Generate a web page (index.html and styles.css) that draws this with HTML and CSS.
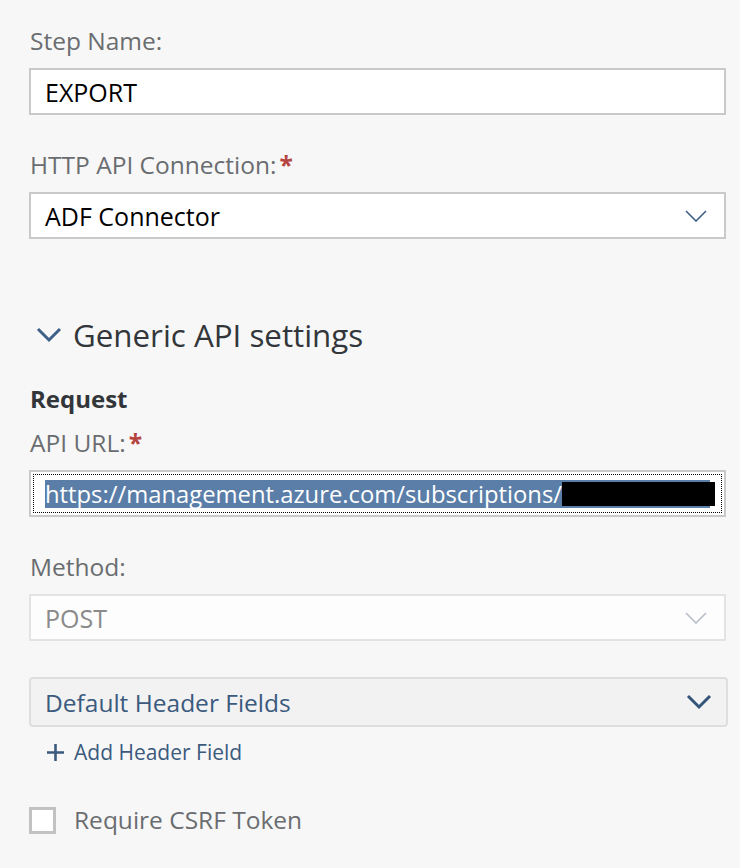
FILE: index.html
```html
<!DOCTYPE html>
<html lang="en">
<head>
<meta charset="utf-8">
<title>Step settings</title>
<link rel="stylesheet" href="styles.css">
</head>
<body>
<div class="form">
  <div class="field">
    <div class="label">Step Name:</div>
    <div class="input"><span class="value">EXPORT</span></div>
  </div>

  <div class="field">
    <div class="label">HTTP API Connection:<span class="req">*</span></div>
    <div class="input select">
      <span class="value">ADF Connector</span>
      <svg class="chev" width="22" height="12" viewBox="0 0 22 12"><polyline points="1,1 11,11 21,1" fill="none" stroke="#3f5f85" stroke-width="1.6"/></svg>
    </div>
  </div>

  <div class="section-head">
    <svg class="sec-chev" width="26" height="16" viewBox="0 0 26 16"><polyline points="2,2 13,13 24,2" fill="none" stroke="#3e5f86" stroke-width="3"/></svg>
    <span class="section-title">Generic API settings</span>
  </div>

  <div class="group-title">Request</div>
  <div class="field">
    <div class="label tight">API URL:<span class="req">*</span></div>
    <div class="input focused">
      <div class="focus-ring">
        <span class="selection">https://management.azure.com/subscriptions/<span class="redact"></span></span>
      </div>
    </div>
  </div>

  <div class="field">
    <div class="label">Method:</div>
    <div class="input select disabled">
      <span class="value">POST</span>
      <svg class="chev" width="22" height="12" viewBox="0 0 22 12"><polyline points="1,1 11,11 21,1" fill="none" stroke="#b7bfca" stroke-width="1.6"/></svg>
    </div>
  </div>

  <div class="panel">
    <span class="panel-title">Default Header Fields</span>
    <svg class="panel-chev" width="26" height="16" viewBox="0 0 26 16"><polyline points="2,2 13,13 24,2" fill="none" stroke="#34557a" stroke-width="3"/></svg>
  </div>

  <div class="add-link">
    <svg class="plus" width="19" height="19" viewBox="0 0 19 19"><path d="M9.5 1V18M1 9.5H18" stroke="#3b5a7e" stroke-width="2.6" fill="none"/></svg>
    <span>Add Header Field</span>
  </div>

  <div class="check-row">
    <span class="checkbox"></span>
    <span class="check-label">Require CSRF Token</span>
  </div>
</div>
</body>
</html>
```

FILE: styles.css
```css
html, body {
  margin: 0;
  padding: 0;
  background: #f7f7f7;
}

body {
  font-family: "Open Sans", "Liberation Sans", sans-serif;
  color: #32363a;
}

.form {
  padding: 26px 14px 0 29px;
}

.field {
  margin-bottom: 35px;
}

.label {
  font-size: 24.5px;
  line-height: 30px;
  color: #6a6d70;
  margin: 0 0 12px 1px;
}

.req {
  color: #b5433f;
  margin-left: 3px;
  font-weight: 700;
}

.input {
  box-sizing: border-box;
  height: 47px;
  background: #ffffff;
  border: 2px solid #c9c9c9;
  display: flex;
  align-items: center;
  padding: 0 17px 0 14px;
}

.value {
  font-size: 25px;
  color: #000000;
  line-height: 30px;
}

.select {
  justify-content: space-between;
}

.chev {
  display: block;
  margin-top: 1px;
}

.disabled {
  border-color: #e3e3e3;
  background: #fdfdfd;
}

.disabled .value {
  color: #8a8a8a;
}

.section-head {
  display: flex;
  align-items: center;
  margin-top: 76px;
  height: 40px;
}

.sec-chev {
  display: block;
  margin: 0 11px 0 7px;
}

.section-title {
  font-size: 31.3px;
  line-height: 40px;
  color: #32363a;
}

.group-title {
  font-size: 24px;
  font-weight: 700;
  line-height: 30px;
  color: #32363a;
  margin: 29px 0 14px 1px;
}

.focused {
  padding: 2px;
}

.focus-ring {
  box-sizing: border-box;
  height: 100%;
  width: 100%;
  border: 1px dotted #000;
  display: flex;
  align-items: center;
  padding-left: 11px;
}

.selection {
  display: inline-flex;
  align-items: center;
  background: #5a7ea8;
  color: #ffffff;
  font-size: 23.8px;
  line-height: 28px;
  height: 28px;
  width: 665px;
  white-space: nowrap;
  overflow: visible;
}

.redact {
  display: inline-block;
  width: 155px;
  height: 24px;
  background: #000;
  margin-left: auto;
  margin-right: -5px;
}

.panel {
  box-sizing: border-box;
  height: 50px;
  margin-top: 36px;
  margin-right: -2px;
  background: #f2f2f2;
  border: 2px solid #dedede;
  border-radius: 4px;
  display: flex;
  align-items: center;
  justify-content: space-between;
  padding: 0 14px 0 14px;
}

.panel-title {
  font-size: 24.5px;
  color: #3b5a7e;
}

.panel-chev {
  display: block;
}

.add-link {
  display: flex;
  align-items: center;
  margin: 9px 0 0 17px;
  height: 32px;
  color: #3b5a7e;
  font-size: 21px;
}

.plus {
  display: block;
  margin-right: 9px;
}

.check-row {
  display: flex;
  align-items: center;
  margin-top: 37px;
}

.checkbox {
  box-sizing: border-box;
  width: 27px;
  height: 27px;
  border: 3px solid #c2c2c2;
  background: #fff;
  margin-right: 18px;
}

.check-label {
  font-size: 24.5px;
  line-height: 30px;
  color: #6a6d70;
}
```
